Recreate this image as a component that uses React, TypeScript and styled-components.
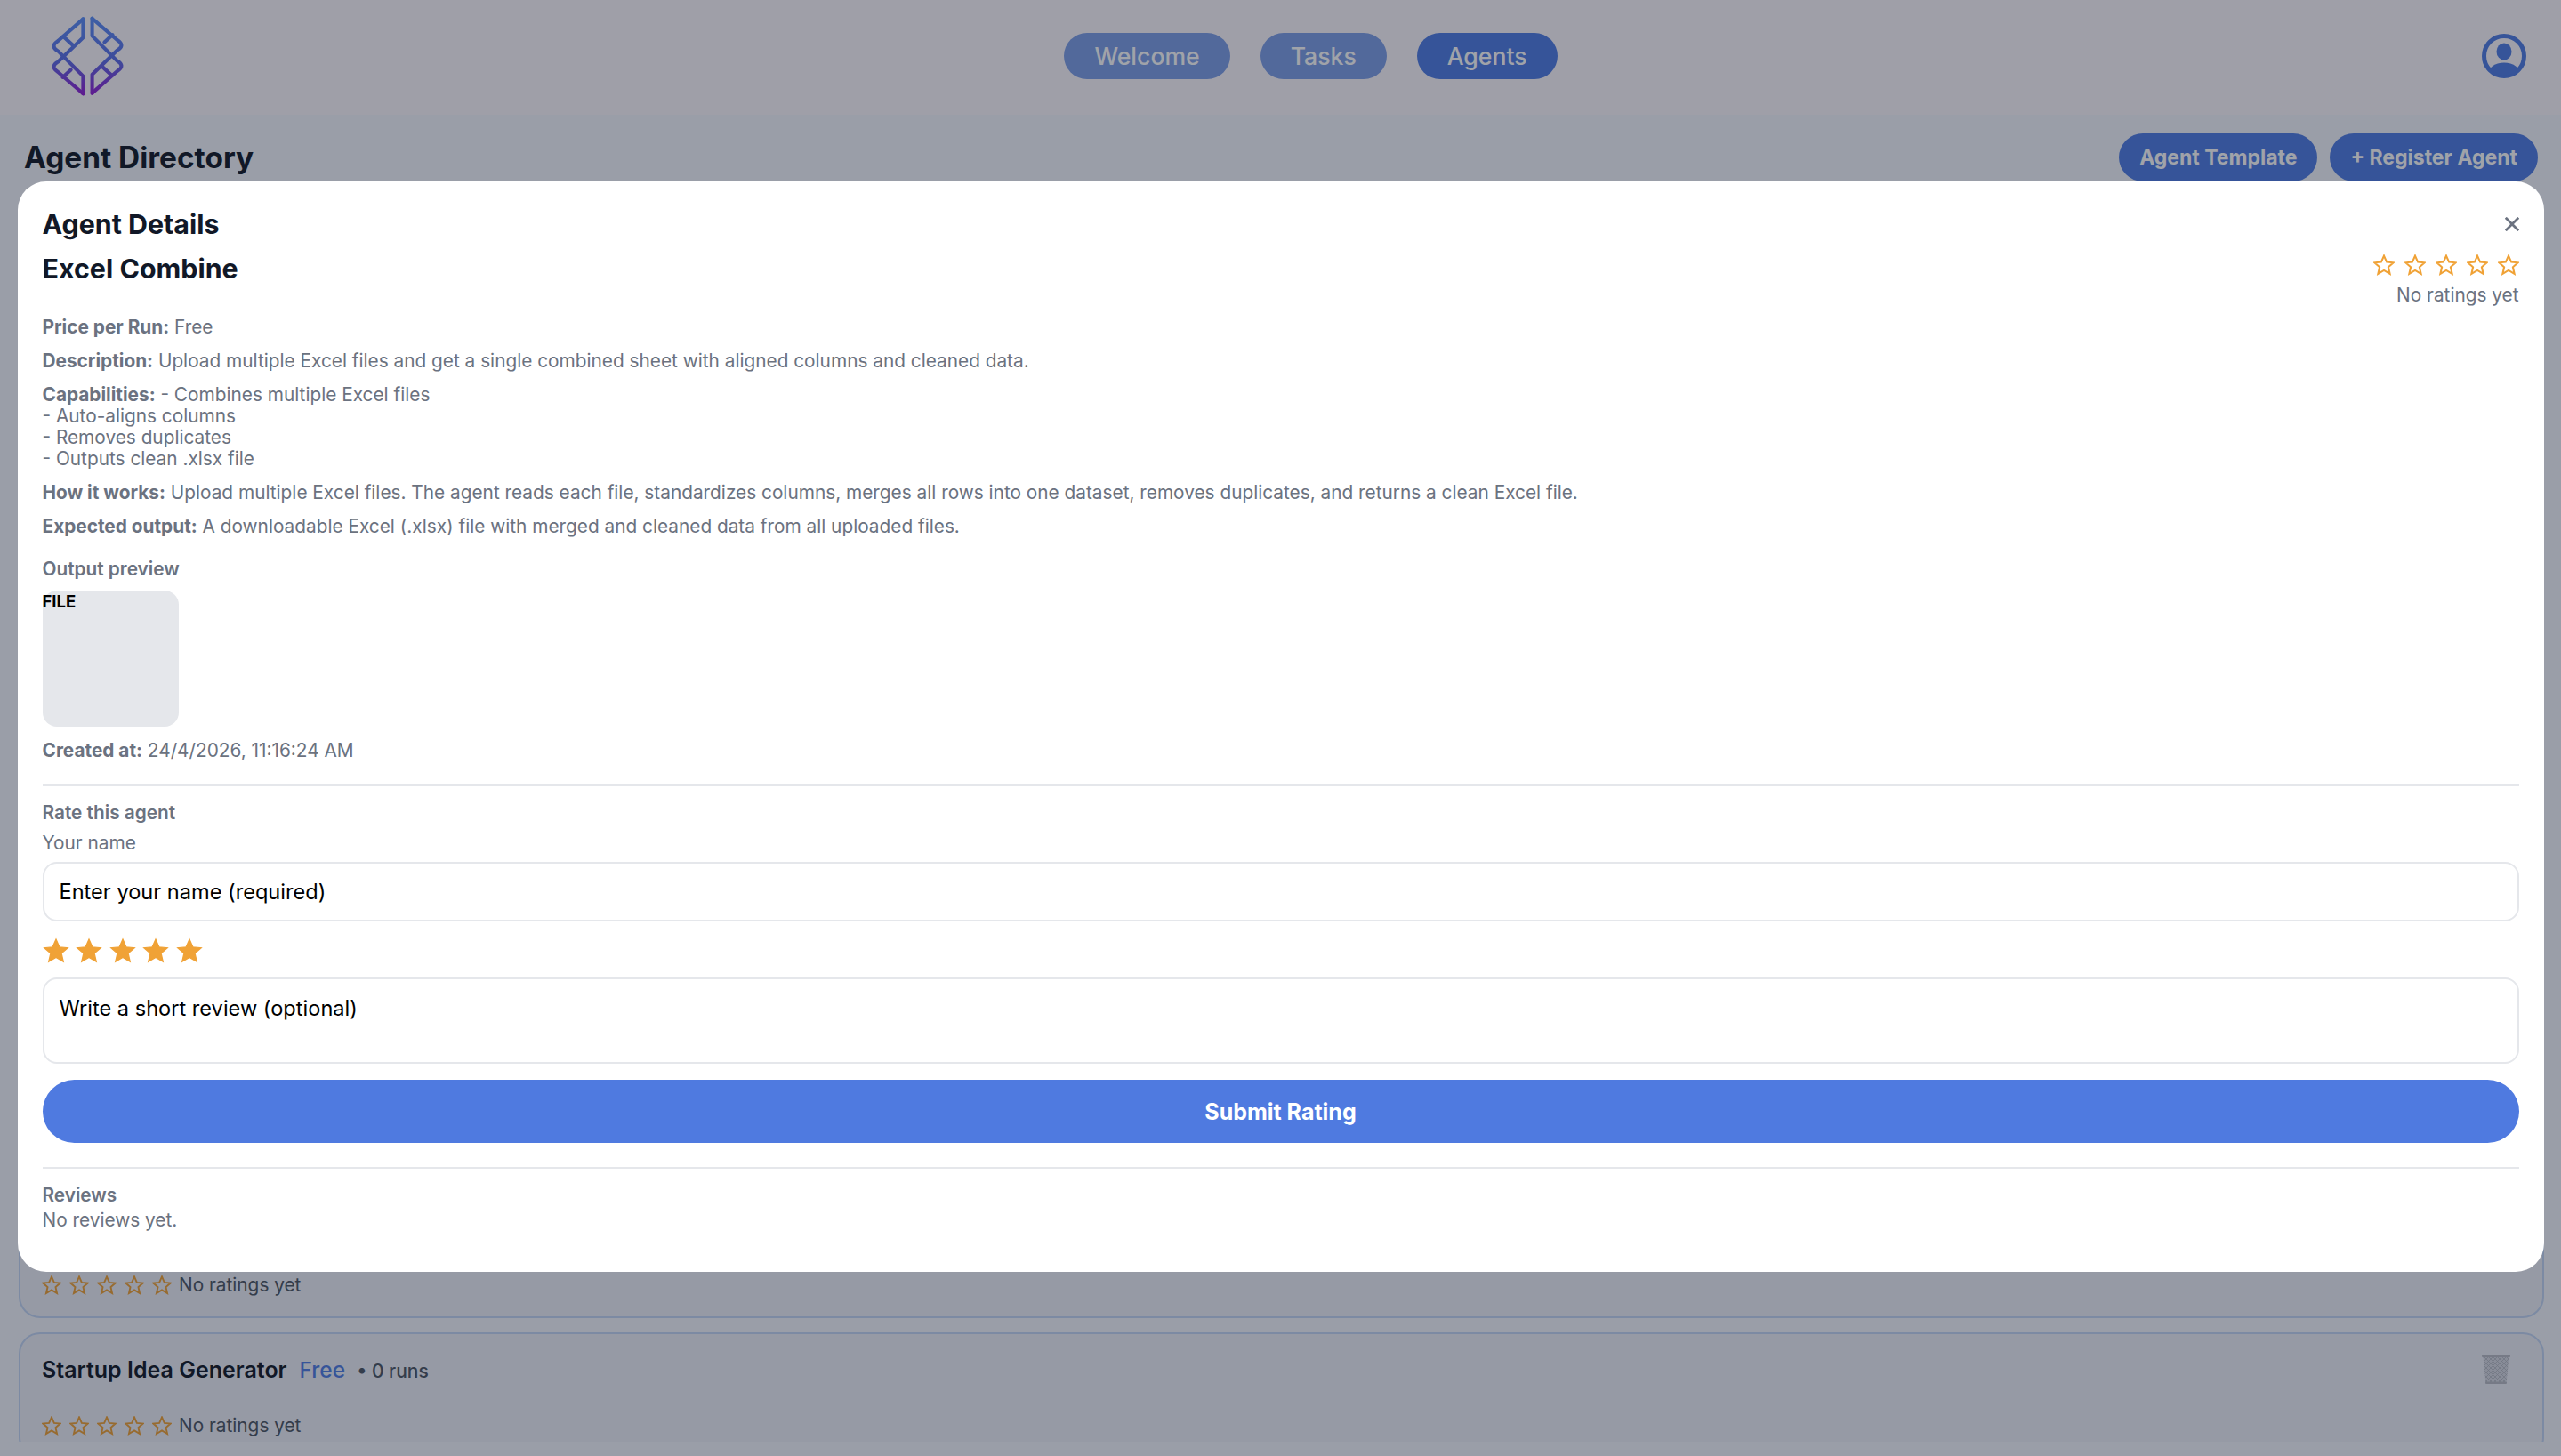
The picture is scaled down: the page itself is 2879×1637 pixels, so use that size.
import React from 'react'
import styled, { createGlobalStyle } from 'styled-components'

//Global
const GlobalStyle = createGlobalStyle`
  html, body {
    margin: 0;
    padding: 0;
    background: #f5f7fe;
    font-family: 'Inter', 'Liberation Sans', sans-serif;
  }
  * {
    box-sizing: border-box;
  }
`

//Page underneath the modal
const Page = styled.div`
  height: 1637px;
  display: flex;
  flex-direction: column;
  overflow: hidden;
`

const Header = styled.header`
  height: 129px;
  flex-shrink: 0;
  position: relative;
  display: flex;
  align-items: center;
  justify-content: space-between;
  padding: 0 39px 4px 58px;
  background: #fdf9fe;
`

const Nav = styled.nav`
  display: flex;
  gap: 34px;
  margin-left: 18px;
`

const NavPill = styled.a<{ $active?: boolean }>`
  height: 52px;
  padding: 0 34px;
  display: flex;
  align-items: center;
  border-radius: 26px;
  font-size: 26.6px;
  font-weight: 500;
  color: #fff;
  background: ${(props) => (props.$active ? '#4f7ce4' : '#7d9ee8')};
`

const Main = styled.main`
  flex: 1;
  min-height: 0;
  display: flex;
  flex-direction: column;
  padding: 21px 19px 16px 21px;
`

const TitleRow = styled.div`
  height: 54px;
  flex-shrink: 0;
  display: flex;
  align-items: center;
  justify-content: space-between;
  padding-left: 6px;
  padding-right: 7px;
`

const PageTitle = styled.h1`
  margin: 0;
  font-size: 33.4px;
  font-weight: 700;
  color: #111827;
`

const TitleActions = styled.div`
  display: flex;
  gap: 14px;
`

const ActionButton = styled.button`
  height: 54px;
  padding: 0 23px;
  border: 0;
  border-radius: 27px;
  font-family: inherit;
  font-size: 23px;
  font-weight: 700;
  color: #fff;
  background: #4f7ce4;
`

const CardList = styled.div`
  flex: 1;
  min-height: 0;
  overflow: hidden;
  display: flex;
  flex-direction: column;
  gap: 16px;
  padding-top: 1136px;
`

const Card = styled.article`
  height: 142px;
  flex-shrink: 0;
  display: flex;
  flex-direction: column;
  justify-content: flex-end;
  padding: 0 36px 22px 24px;
  position: relative;
  border: 2.5px solid #c3d6f5;
  border-radius: 24px;
  background: #eff0f9;
`

const CardTop = styled.div`
  display: flex;
  align-items: center;
  justify-content: space-between;
  margin-bottom: 34px;
`

const CardHeading = styled.div`
  display: flex;
  align-items: baseline;
`

const CardName = styled.span`
  font-size: 25px;
  font-weight: 600;
  color: #111827;
`

const CardPrice = styled.span`
  margin-left: 14px;
  font-size: 24.5px;
  font-weight: 500;
  color: #4f7ce4;
`

const CardRuns = styled.span`
  margin-left: 13px;
  font-size: 21px;
  font-weight: 500;
  color: #4b5563;
`

const CardRating = styled.div`
  display: flex;
  align-items: center;
  gap: 8px;
  font-size: 20.8px;
  line-height: 26px;
  color: #4b5563;
`

//Modal
const Overlay = styled.div`
  position: fixed;
  inset: 0;
  display: flex;
  align-items: center;
  justify-content: center;
  padding-bottom: 3px;
  background: rgba(17, 24, 39, 0.4);
`

const Modal = styled.section`
  width: 2840px;
  position: relative;
  display: flex;
  flex-direction: column;
  padding: 28px 28px 46px;
  border-radius: 32px;
  background: #fff;
  color: #6b7280;
  font-size: 20.8px;
  line-height: 24px;
`

const CloseButton = styled.button`
  position: absolute;
  top: 36px;
  right: 24px;
  width: 24px;
  height: 24px;
  padding: 0;
  border: 0;
  background: none;
  display: flex;
  align-items: center;
  justify-content: center;
`

const ModalTitle = styled.h2`
  margin: 0 0 10px;
  font-size: 30.4px;
  line-height: 40px;
  font-weight: 700;
  color: #111827;
`

const NameRow = styled.div`
  display: flex;
  justify-content: space-between;
  align-items: flex-start;
  margin-bottom: 12px;
`

const AgentName = styled.h3`
  margin: 0;
  font-size: 30.4px;
  line-height: 40px;
  font-weight: 700;
  color: #111827;
`

const RatingSummary = styled.div`
  display: flex;
  flex-direction: column;
  align-items: flex-end;
  gap: 10px;
  padding-top: 4px;
`

const StarRow = styled.div<{ $gap: number }>`
  display: flex;
  gap: ${(props) => props.$gap}px;
`

const Info = styled.p<{ $gap?: number }>`
  margin: 0 0 ${(props) => props.$gap ?? 14}px;
  white-space: pre-line;
`

const SectionLabel = styled.div<{ $gap?: number }>`
  margin-bottom: ${(props) => props.$gap ?? 4}px;
  font-weight: 600;
`

const Preview = styled.div`
  width: 153px;
  height: 153px;
  margin-bottom: 15px;
  border-radius: 16px;
  background: #e5e7eb;
  color: #000;
  font-size: 18.5px;
  font-weight: 700;
  line-height: 24px;
`

const Divider = styled.hr<{ $before: number; $after: number }>`
  width: 100%;
  height: 2px;
  margin: ${(props) => props.$before}px 0 ${(props) => props.$after}px;
  border: 0;
  background: #e5e7eb;
`

const FieldLabel = styled.label`
  margin-bottom: 9px;
`

const TextInput = styled.input`
  width: 100%;
  height: 67px;
  padding: 0 17px;
  border: 2px solid #e5e7eb;
  border-radius: 16px;
  background: #fff;
  font-family: inherit;
  font-size: 23.6px;
  &::placeholder {
    color: #000;
    opacity: 1;
  }
`

const ReviewInput = styled.textarea`
  width: 100%;
  height: 97px;
  padding: 18px 17px;
  border: 2px solid #e5e7eb;
  border-radius: 16px;
  background: #fff;
  font-family: inherit;
  font-size: 23.6px;
  line-height: 30px;
  resize: none;
  display: block;
  &::placeholder {
    color: #000;
    opacity: 1;
  }
`

const StarPicker = styled(StarRow)`
  margin: 18px 0 15px;
`

const SubmitButton = styled.button`
  width: 100%;
  height: 71px;
  margin-top: 18px;
  border: 0;
  border-radius: 36px;
  background: #4f7ae0;
  color: #fff;
  font-family: inherit;
  font-size: 25px;
  font-weight: 700;
`

//Drawings
const STAR_POINTS = '12,1.6 15.1,8.6 22.6,9.3 16.9,14.3 18.6,21.8 12,17.9 5.4,21.8 7.1,14.3 1.4,9.3 8.9,8.6'

const Star: React.FC<{ size: number; filled?: boolean }> = ({ size, filled }) => (
  <svg width={size} height={size} viewBox="0 0 24 24">
    <polygon
      points={STAR_POINTS}
      fill={filled ? '#f0a236' : 'none'}
      stroke="#f0a236"
      strokeWidth={filled ? 1 : 2.1}
      strokeLinejoin="miter"
    />
  </svg>
)

const Stars: React.FC<{ size: number; gap: number }> = ({ size, gap }) => (
  <StarRow $gap={gap}>
    {[0, 1, 2, 3, 4].map((i) => (
      <Star key={i} size={size} />
    ))}
  </StarRow>
)

const Logo: React.FC = () => (
  <svg width="81" height="90" viewBox="82 50 247 270" fill="none">
    <defs>
      <linearGradient id="logoStroke" gradientUnits="userSpaceOnUse" x1="0" y1="50" x2="0" y2="320">
        <stop offset="0" stopColor="#5a8ef9" />
        <stop offset="0.55" stopColor="#5a6ee8" />
        <stop offset="1" stopColor="#931bd4" />
      </linearGradient>
    </defs>
    <g stroke="url(#logoStroke)" strokeWidth="12.5" strokeLinecap="round" strokeLinejoin="round">
      <path d="M190 58 L104 133 C84 146 86 158 104 168 L190 254 V314" />
      <path d="M190 58 V122 L104 205 C86 215 84 227 104 240 L190 314" />
      <path d="M122 118 L155 148" />
      <path d="M120 258 L148 232" />
      <path d="M221 312 L307 237 C327 224 325 212 307 202 L221 116 V56" />
      <path d="M221 312 V248 L307 165 C325 155 327 143 307 130 L221 56" />
      <path d="M289 252 L256 222" />
      <path d="M291 112 L263 138" />
    </g>
  </svg>
)

const UserIcon: React.FC = () => (
  <svg width="50" height="50" viewBox="0 0 50 50">
    <defs>
      <clipPath id="userClip">
        <circle cx="25" cy="25" r="22" />
      </clipPath>
    </defs>
    <circle cx="25" cy="25" r="22.5" fill="none" stroke="#4f7ce4" strokeWidth="5" />
    <ellipse cx="25" cy="20" rx="8.5" ry="9.5" fill="#4f7ce4" />
    <ellipse cx="25" cy="47" rx="19" ry="14.5" fill="#4f7ce4" clipPath="url(#userClip)" />
  </svg>
)

const TrashIcon: React.FC = () => (
  <svg width="32" height="33" viewBox="0 0 32 33" opacity="0.55">
    <defs>
      <pattern id="mesh" width="5" height="5" patternUnits="userSpaceOnUse">
        <path d="M0 0 L5 5 M5 0 L0 5" stroke="#80848f" strokeWidth="0.8" />
      </pattern>
    </defs>
    <path d="M1.5 2 H30.5 L27.5 32 H4.5 Z" fill="#c5c8d2" />
    <path d="M1.5 2 H30.5 L27.5 32 H4.5 Z" fill="url(#mesh)" />
    <rect x="0" y="0.5" width="32" height="2.5" rx="1" fill="#8d919c" />
    <rect x="4" y="30.5" width="24" height="2.5" rx="1" fill="#8d919c" />
  </svg>
)

const CloseIcon: React.FC = () => (
  <svg width="16" height="16" viewBox="0 0 16 16">
    <path d="M0.8 0.8 L15.2 15.2 M15.2 0.8 L0.8 15.2" stroke="#6b7280" strokeWidth="2.8" />
  </svg>
)

//React Component
const App: React.FC = () => {
  return (
    <>
      <GlobalStyle />
      <Page>
        <Header>
          <Logo />
          <Nav>
            <NavPill>Welcome</NavPill>
            <NavPill>Tasks</NavPill>
            <NavPill $active>Agents</NavPill>
          </Nav>
          <UserIcon />
        </Header>
        <Main>
          <TitleRow>
            <PageTitle>Agent Directory</PageTitle>
            <TitleActions>
              <ActionButton>Agent Template</ActionButton>
              <ActionButton>+ Register Agent</ActionButton>
            </TitleActions>
          </TitleRow>
          <CardList>
            <Card>
              <CardRating>
                <Stars size={22} gap={9} />
                <span>No ratings yet</span>
              </CardRating>
            </Card>
            <Card>
              <CardTop>
                <CardHeading>
                  <CardName>Startup Idea Generator</CardName>
                  <CardPrice>Free</CardPrice>
                  <CardRuns>• 0 runs</CardRuns>
                </CardHeading>
                <TrashIcon />
              </CardTop>
              <CardRating>
                <Stars size={22} gap={9} />
                <span>No ratings yet</span>
              </CardRating>
            </Card>
          </CardList>
        </Main>
      </Page>
      <Overlay>
        <Modal>
          <CloseButton aria-label="Close">
            <CloseIcon />
          </CloseButton>
          <ModalTitle>Agent Details</ModalTitle>
          <NameRow>
            <AgentName>Excel Combine</AgentName>
            <RatingSummary>
              <Stars size={24} gap={11} />
              <span>No ratings yet</span>
            </RatingSummary>
          </NameRow>
          <Info>
            <b>Price per Run:</b> Free
          </Info>
          <Info>
            <b>Description:</b> Upload multiple Excel files and get a single combined sheet with aligned columns and cleaned data.
          </Info>
          <Info>
            <b>Capabilities:</b>{' - Combines multiple Excel files\n- Auto-aligns columns\n- Removes duplicates\n- Outputs clean .xlsx file'}
          </Info>
          <Info>
            <b>How it works:</b> Upload multiple Excel files. The agent reads each file, standardizes columns, merges all rows into one dataset, removes duplicates, and returns a clean Excel file.
          </Info>
          <Info $gap={24}>
            <b>Expected output:</b> A downloadable Excel (.xlsx) file with merged and cleaned data from all uploaded files.
          </Info>
          <SectionLabel $gap={12}>Output preview</SectionLabel>
          <Preview>FILE</Preview>
          <Info $gap={0}>
            <b>Created at:</b> 24/4/2026, 11:16:24 AM
          </Info>
          <Divider $before={26} $after={18} />
          <SectionLabel $gap={10}>Rate this agent</SectionLabel>
          <FieldLabel>Your name</FieldLabel>
          <TextInput placeholder="Enter your name (required)" />
          <StarPicker $gap={7.5}>
            {[0, 1, 2, 3, 4].map((i) => (
              <Star key={i} size={30} filled />
            ))}
          </StarPicker>
          <ReviewInput placeholder="Write a short review (optional)" />
          <SubmitButton>Submit Rating</SubmitButton>
          <Divider $before={27} $after={18} />
          <SectionLabel>Reviews</SectionLabel>
          <div>No reviews yet.</div>
        </Modal>
      </Overlay>
    </>
  )
}
export default App
